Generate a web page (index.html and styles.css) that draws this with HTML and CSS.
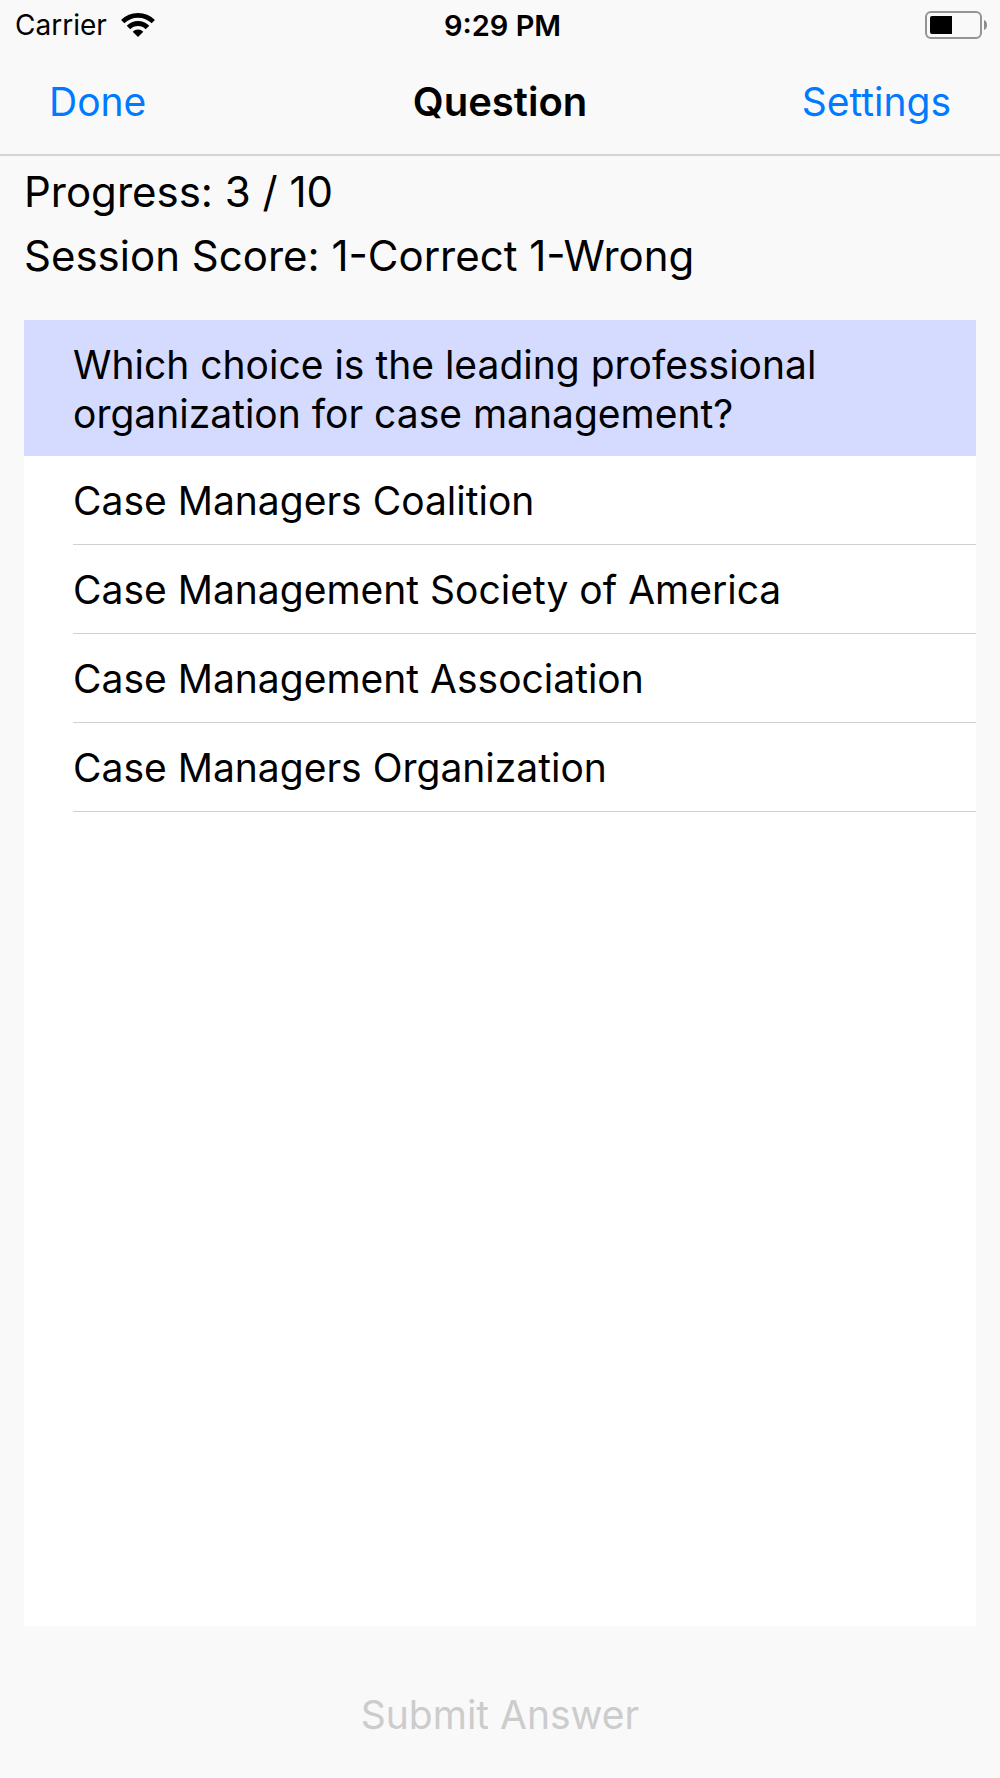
FILE: index.html
```html
<!DOCTYPE html>
<html lang="en">
<head>
<meta charset="utf-8">
<meta name="viewport" content="width=device-width, initial-scale=1">
<title>Question</title>
<link rel="stylesheet" href="styles.css">
</head>
<body>
<div class="status">
  <div class="carrier">
    <span>Carrier</span>
    <svg class="wifi" viewBox="0 0 34 25" aria-hidden="true">
      <path class="wifi-arc" stroke-width="4.6" d="M1.700 8.700A21.600 21.600 0 0 1 32.300 8.700"/>
      <path class="wifi-arc" stroke-width="5" d="M7.500 14.500A13.400 13.400 0 0 1 26.500 14.500"/>
      <path d="M11.700 18.700A7.500 7.500 0 0 1 22.300 18.700L17 24Z"/>
    </svg>
  </div>
  <time class="clock">9:29 PM</time>
  <svg class="battery" viewBox="0 0 62 28" aria-hidden="true">
    <rect class="battery-case" x="1" y="1" width="55" height="26" rx="5"/>
    <rect x="5" y="5" width="22" height="18" rx="2"/>
    <rect x="15" y="5" width="12" height="18"/>
    <path class="battery-tip" d="M59 9Q62 10 62 14T59 19Z"/>
  </svg>
</div>
<header class="nav">
  <button class="nav-button" type="button">Done</button>
  <h1 class="title">Question</h1>
  <button class="nav-button nav-end" type="button">Settings</button>
</header>
<main class="content">
  <p class="summary">Progress: 3 / 10</p>
  <p class="summary">Session Score: 1-Correct 1-Wrong</p>
  <section class="quiz">
    <h2 class="question">Which choice is the leading professional organization for case management?</h2>
    <ul class="choices">
      <li><button class="choice" type="button">Case Managers Coalition</button></li>
      <li><button class="choice" type="button">Case Management Society of America</button></li>
      <li><button class="choice" type="button">Case Management Association</button></li>
      <li><button class="choice" type="button">Case Managers Organization</button></li>
    </ul>
  </section>
</main>
<footer class="footer"><button class="submit" type="button" disabled>Submit Answer</button></footer>
</body>
</html>
```
FILE: styles.css
```css
* { box-sizing: border-box; }
body {
  margin: 0;
  min-height: 100vh;
  display: flex;
  flex-direction: column;
  background: #f9f9f9;
  color: #000;
  font-family: Inter, "Liberation Sans", sans-serif;
}
button {
  padding: 0;
  border: 0;
  background: none;
  color: inherit;
  font: inherit;
}
.status {
  height: 50px;
  padding: 0 13px 0 15px;
  display: grid;
  grid-template-columns: 1fr auto 1fr;
  align-items: center;
  font-size: 28px;
}
.carrier { display: flex; align-items: center; gap: 14px; }
.wifi { width: 34px; height: 25px; }
.wifi-arc { fill: none; stroke: #000; }
.clock { padding-left: 3px; font-size: 29px; font-weight: 600; }
.battery { width: 62px; height: 28px; justify-self: end; }
.battery-case { fill: none; stroke: #949494; stroke-width: 2; }
.battery-tip { fill: #8c8c8c; }
.nav {
  height: 106px;
  padding: 0 49px 2px;
  display: grid;
  grid-template-columns: 1fr auto 1fr;
  align-items: center;
  border-bottom: 2px solid #d4d4d4;
  font-size: 39px;
}
.nav-button { justify-self: start; color: #007aff; }
.nav-end { justify-self: end; }
.title { margin: 0; font-size: 40px; font-weight: 600; }
.content {
  flex: 1;
  display: flex;
  flex-direction: column;
  padding: 4px 24px 0;
}
.summary { margin: 0; font-size: 42px; line-height: 64px; }
.quiz { flex: 1; margin-top: 32px; background: #fff; }
.question {
  margin: 0;
  padding: 20px 49px 18px;
  background: #d4dbff;
  font-size: 39px;
  font-weight: 400;
  line-height: 49px;
}
.choices { margin: 0; padding: 0 0 0 49px; list-style: none; }
.choice {
  display: block;
  width: 100%;
  height: 89px;
  border-bottom: 1px solid #d1d1d4;
  font-size: 39px;
  text-align: left;
}
.footer { height: 152px; padding-top: 24px; display: grid; place-items: center; }
.submit { color: #ccc; font-size: 39px; }
```
